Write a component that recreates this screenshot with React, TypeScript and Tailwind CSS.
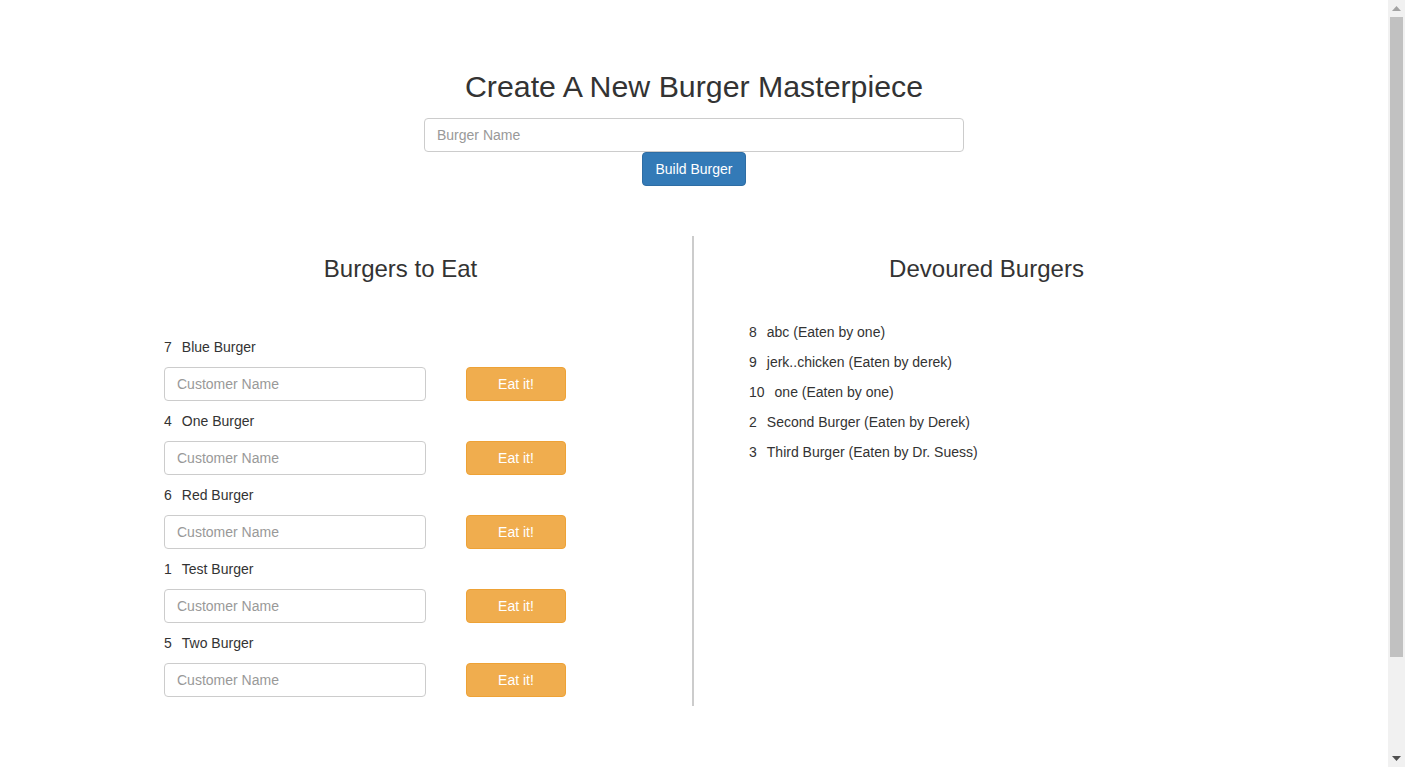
import React from 'react';

const toEat = [
  { id: 7, name: 'Blue Burger' },
  { id: 4, name: 'One Burger' },
  { id: 6, name: 'Red Burger' },
  { id: 1, name: 'Test Burger' },
  { id: 5, name: 'Two Burger' },
];

const devoured = [
  { id: 8, name: 'abc', by: 'one' },
  { id: 9, name: 'jerk..chicken', by: 'derek' },
  { id: 10, name: 'one', by: 'one' },
  { id: 2, name: 'Second Burger', by: 'Derek' },
  { id: 3, name: 'Third Burger', by: 'Dr. Suess' },
];

function Scrollbar() {
  return (
    <div className="flex h-full w-[17px] shrink-0 flex-col bg-[#f1f1f1]">
      <div className="flex h-[17px] items-center justify-center">
        <svg width="9" height="5" viewBox="0 0 9 5">
          <path d="M4.5 0L9 5H0z" fill="#a3a3a3" />
        </svg>
      </div>
      <div className="mx-[2px] h-[640px] bg-[#c1c1c1]" />
      <div className="flex-1" />
      <div className="flex h-[17px] items-center justify-center">
        <svg width="9" height="5" viewBox="0 0 9 5">
          <path d="M0 0H9L4.5 5z" fill="#505050" />
        </svg>
      </div>
    </div>
  );
}

export default function App() {
  return (
    <div className="flex h-screen overflow-hidden bg-white font-['Liberation_Sans',Arial,sans-serif] text-[14px] leading-[20px] text-[#333]">
      <div className="flex-1 overflow-hidden">
        {/* Create form */}
        <div className="flex flex-col items-center pt-[70px]">
          <h2 className="text-[30.3px] font-normal leading-[33px]">Create A New Burger Masterpiece</h2>
          <input
            type="text"
            placeholder="Burger Name"
            className="mt-[15px] h-[34px] w-[540px] rounded-[4px] border border-[#ccc] px-[12px] text-[14px] text-[#555] placeholder:text-[#999] focus:outline-none"
          />
          <button className="h-[34px] rounded-[4px] border border-[#2e6da4] bg-[#337ab7] px-[12px] text-[14px] text-white">
            Build Burger
          </button>
        </div>

        {/* Lists */}
        <div className="mx-auto mt-[50px] flex w-[1170px]">
          <div className="w-[585px] border-r-2 border-[#ccc] px-[15px] pb-[9px]">
            <h3 className="mt-[20px] text-center text-[24px] font-normal leading-[26px]">Burgers to Eat</h3>
            <ul className="mt-[55px] flex flex-col gap-[10px] pl-[40px]">
              {toEat.map((b) => (
                <li key={b.id} className="flex flex-col gap-[10px]">
                  <div className="flex gap-[10px]">
                    <span>{b.id}</span>
                    <span>{b.name}</span>
                  </div>
                  <div className="flex gap-[40px]">
                    <input
                      type="text"
                      placeholder="Customer Name"
                      className="h-[34px] w-[262px] rounded-[4px] border border-[#ccc] px-[12px] text-[14px] text-[#555] placeholder:text-[#999] focus:outline-none"
                    />
                    <button className="h-[34px] w-[100px] rounded-[4px] border border-[#eea236] bg-[#f0ad4e] text-[14px] text-white">
                      Eat it!
                    </button>
                  </div>
                </li>
              ))}
            </ul>
          </div>
          <div className="w-[585px] px-[15px]">
            <h3 className="mt-[20px] text-center text-[24px] font-normal leading-[26px]">Devoured Burgers</h3>
            <ul className="mt-[40px] flex flex-col gap-[10px] pl-[40px]">
              {devoured.map((b) => (
                <li key={b.id} className="flex gap-[10px]">
                  <span>{b.id}</span>
                  <span>
                    {b.name} (Eaten by {b.by})
                  </span>
                </li>
              ))}
            </ul>
          </div>
        </div>
      </div>
      <Scrollbar />
    </div>
  );
}
